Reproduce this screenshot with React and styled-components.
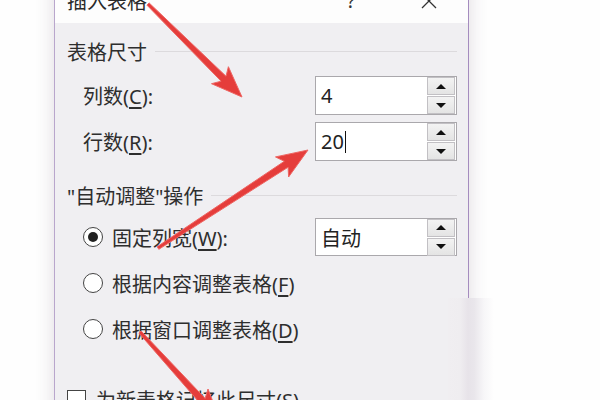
import styled, { createGlobalStyle } from 'styled-components'

const GlobalStyle = createGlobalStyle`
  html, body {
    margin: 0;
    padding: 0;
    background: #fefefe;
    overflow: hidden;
  }
  body {
    font-family: "Noto Sans", "Noto Sans CJK SC", sans-serif;
  }
`

const Page = styled.div`
  position: relative;
  width: 600px;
  height: 400px;
  overflow: hidden;
  background: #fefefe;
`

const Dialog = styled.div`
  margin-top: -22px;
  margin-left: 54px;
  width: 413px;
  height: 440px;
  border-left: 1px solid #b9a6cc;
  border-right: 1px solid #a58cbf;
  background: #f0eff2;
  box-shadow: 0 0 18px rgba(60, 40, 70, 0.16);
  display: flex;
  flex-direction: column;
`

const TitleBar = styled.div`
  height: 45px;
  background: #fdfdfd;
  display: flex;
  align-items: center;
  padding-left: 12px;
  color: #2a2a2a;
  font-size: 20px;
`

const TitleText = styled.span`
  flex: 1;
`

const TitleButton = styled.div`
  width: 30px;
  height: 30px;
  display: flex;
  align-items: center;
  justify-content: center;
  margin-right: ${(p) => p.$gap}px;
  font-size: 20px;
  color: #333;
`

const Body = styled.div`
  padding: 14px 11px 0 12px;
  display: flex;
  flex-direction: column;
`

const SectionHeader = styled.div`
  display: flex;
  align-items: center;
  height: 28px;
  margin-top: ${(p) => p.$top || 0}px;
  font-size: 20px;
  color: #2e2e2e;

  &::after {
    content: '';
    flex: 1;
    height: 1px;
    background: #dcdadd;
    margin-left: 8px;
  }
`

const Row = styled.div`
  display: flex;
  align-items: center;
  height: ${(p) => p.$h || 39}px;
  margin-top: ${(p) => p.$top || 0}px;
  padding-left: 16px;
  font-size: 20px;
  color: #2e2e2e;
`

const Label = styled.span`
  flex: 1;

  u {
    text-underline-offset: 3px;
  }
`

const SpinBox = styled.div`
  width: 142px;
  height: ${(p) => p.$h || 39}px;
  box-sizing: border-box;
  border: 1px solid #aaa8ac;
  background: #fff;
  display: flex;
  align-items: center;
  padding-left: 5px;
  font-size: 20px;
  color: #222;
`

const Caret = styled.span`
  display: inline-block;
  width: 1px;
  height: 22px;
  background: #111;
  margin-left: 1px;
  vertical-align: middle;
`

const SpinColumn = styled.div`
  margin-left: auto;
  margin-right: 1px;
  display: flex;
  flex-direction: column;
  gap: 1px;
`

const SpinButton = styled.div`
  width: 26px;
  height: 16px;
  border: 1px solid #c2c0c4;
  background: linear-gradient(#f3f3f3, #e4e4e4);
  display: flex;
  align-items: center;
  justify-content: center;

  &::before {
    content: '';
    border-left: 5px solid transparent;
    border-right: 5px solid transparent;
    ${(p) =>
      p.$down
        ? 'border-top: 5px solid #111;'
        : 'border-bottom: 5px solid #111;'}
  }
`

const Radio = styled.span`
  width: 18px;
  height: 18px;
  border: 1.5px solid #444;
  border-radius: 50%;
  background: #fff;
  margin-right: 9px;
  display: flex;
  align-items: center;
  justify-content: center;

  &::after {
    content: '';
    width: 10px;
    height: 10px;
    border-radius: 50%;
    background: ${(p) => (p.$checked ? '#222' : 'transparent')};
  }
`

const CheckRow = styled.div`
  display: flex;
  align-items: flex-start;
  margin-top: 42px;
  font-size: 20px;
  color: #2e2e2e;
  line-height: 22px;
`

const CheckBox = styled.span`
  width: 17px;
  height: 17px;
  border: 1px solid #444;
  background: #fff;
  margin-right: 10px;
`

const EdgePatch = styled.div`
  position: absolute;
  left: 448px;
  top: 298px;
  width: 152px;
  height: 102px;
  background: linear-gradient(
    to right,
    #f0eef1 0,
    #efedf0 12px,
    #e7e3e9 20px,
    #e9e6eb 26px,
    #f7f6f8 36px,
    #fefefe 46px
  );
`

const Overlay = styled.svg`
  position: absolute;
  left: 0;
  top: 0;
  pointer-events: none;
`

function arrowPoints(sx, sy, ex, ey, tail, neck, head, headLen) {
  const dx = ex - sx
  const dy = ey - sy
  const len = Math.hypot(dx, dy)
  const ux = dx / len
  const uy = dy / len
  const nx = -uy
  const ny = ux
  const bx = ex - ux * headLen
  const by = ey - uy * headLen
  const bbx = bx - ux * 5
  const bby = by - uy * 5
  const pts = [
    [sx + nx * tail, sy + ny * tail],
    [bx + nx * neck, by + ny * neck],
    [bbx + nx * head, bby + ny * head],
    [ex, ey],
    [bbx - nx * head, bby - ny * head],
    [bx - nx * neck, by - ny * neck],
    [sx - nx * tail, sy - ny * tail],
  ]
  return pts.map((p) => p.map((v) => v.toFixed(1)).join(',')).join(' ')
}

function RedArrow({ from, to }) {
  return (
    <polygon
      points={arrowPoints(from[0], from[1], to[0], to[1], 1.5, 3.5, 12, 26)}
      fill="#e53d3b"
      stroke="#ee6663"
      strokeWidth="1"
      strokeLinejoin="round"
    />
  )
}

function CloseIcon() {
  return (
    <svg width="18" height="18" viewBox="0 0 18 18">
      <path d="M2 2 L16 16 M16 2 L2 16" stroke="#333" strokeWidth="1.3" />
    </svg>
  )
}

function Spinner({ children, h }) {
  return (
    <SpinBox $h={h}>
      {children}
      <SpinColumn>
        <SpinButton />
        <SpinButton $down />
      </SpinColumn>
    </SpinBox>
  )
}

export default function App() {
  return (
    <Page>
      <GlobalStyle />
      <Dialog>
        <TitleBar>
          <TitleText>插入表格</TitleText>
          <TitleButton $gap={48}>?</TitleButton>
          <TitleButton $gap={24}>
            <CloseIcon />
          </TitleButton>
        </TitleBar>
        <Body>
          <SectionHeader>表格尺寸</SectionHeader>
          <Row $top={11}>
            <Label>
              列数(<u>C</u>):
            </Label>
            <Spinner>4</Spinner>
          </Row>
          <Row $top={7}>
            <Label>
              行数(<u>R</u>):
            </Label>
            <Spinner>
              20
              <Caret />
            </Spinner>
          </Row>
          <SectionHeader $top={20}>"自动调整"操作</SectionHeader>
          <Row $top={9} $h={38}>
            <Radio $checked />
            <Label>
              固定列宽(<u>W</u>):
            </Label>
            <Spinner h={38}>自动</Spinner>
          </Row>
          <Row $top={8} $h={38}>
            <Radio />
            <Label>
              根据内容调整表格(<u>F</u>)
            </Label>
          </Row>
          <Row $top={8} $h={38}>
            <Radio />
            <Label>
              根据窗口调整表格(<u>D</u>)
            </Label>
          </Row>
          <CheckRow>
            <CheckBox />
            <span>
              为新表格记忆此尺寸(<u>S</u>)
            </span>
          </CheckRow>
        </Body>
      </Dialog>
      <EdgePatch />
      <Overlay width="600" height="400" viewBox="0 0 600 400">
        <RedArrow from={[148, 4]} to={[242, 97]} />
        <RedArrow from={[158, 248]} to={[308, 150]} />
        <RedArrow from={[140, 332]} to={[220, 420]} />
      </Overlay>
    </Page>
  )
}
